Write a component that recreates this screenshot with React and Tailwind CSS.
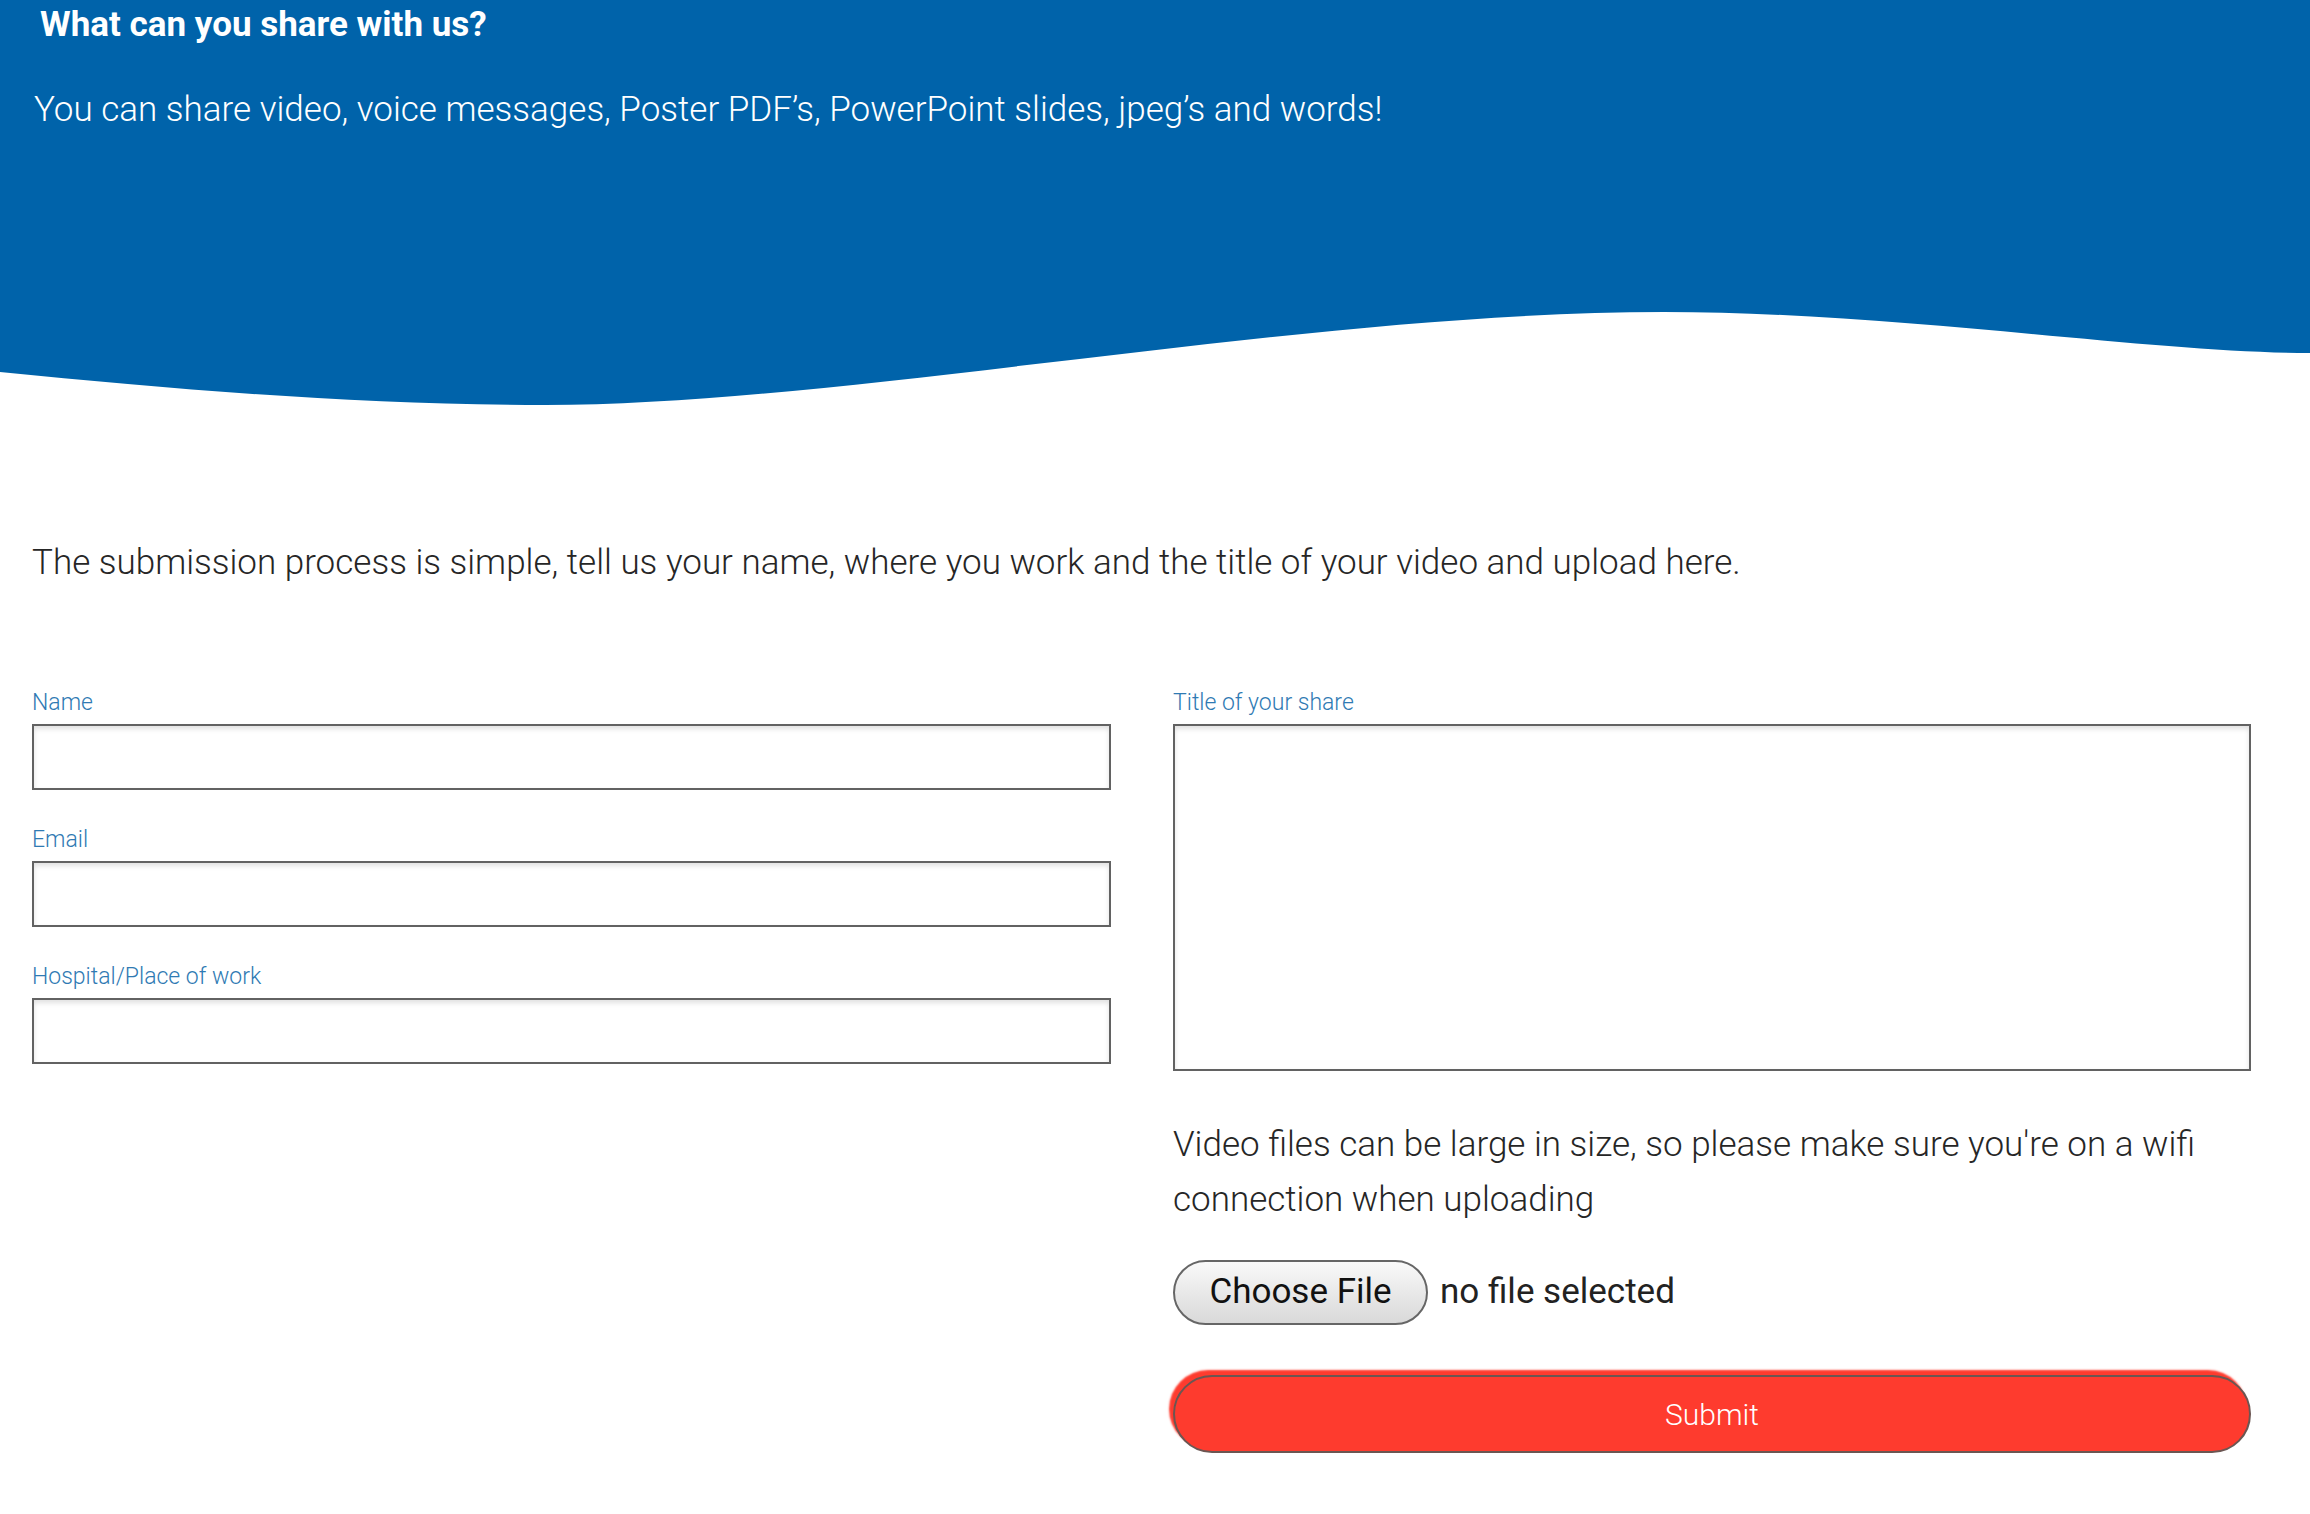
import React from 'react';

const labelCls = "block text-[23px] leading-[26px] font-light text-[#2f7ab3]";
const boxCls = "block w-full border-2 border-[#626262] bg-white shadow-[inset_0_3px_5px_rgba(0,0,0,0.12)] outline-none";

const Field = ({ label }) => (
  <div>
    <label className={labelCls}>{label}</label>
    <input type="text" className={`mt-2 h-[66px] ${boxCls}`} />
  </div>
);

export default function App() {
  return (
    <div className="min-h-[1514px] bg-white font-['Roboto',sans-serif] text-[#262626]">
      <header className="bg-[#0063aa] h-[300px] pt-[5px]">
        <h2 className="pl-[40px] text-[35px] leading-[40px] font-bold text-white">
          What can you share with us?
        </h2>
        <p className="pl-[34px] mt-[41px] text-[35px] leading-[48px] font-light text-white">
          You can share video, voice messages, Poster PDF’s, PowerPoint slides, jpeg’s and words!
        </p>
      </header>

      {/* wave under the banner */}
      <svg className="block w-full h-[110px]" viewBox="0 0 2310 110" preserveAspectRatio="none">
        <path
          d="M0 0 H2310 V53 C2150 53 1900 12 1664 12 C1300 12 850 105 545 105 C360 105 180 90 0 72 Z"
          fill="#0063aa"
        />
      </svg>

      <main className="px-[32px]">
        <p className="mt-[127px] text-[35px] leading-[51px] font-light">
          The submission process is simple, tell us your name, where you work and the title of your video and upload here.
        </p>

        <div className="mt-[102px] grid grid-cols-[1079px_1078px] gap-x-[62px] items-start">
          <div className="flex flex-col gap-[37px]">
            <Field label="Name" />
            <Field label="Email" />
            <Field label="Hospital/Place of work" />
          </div>

          <div>
            <label className={labelCls}>Title of your share</label>
            <textarea className={`mt-2 h-[347px] resize-none ${boxCls}`} />

            <p className="mt-[46px] text-[35px] leading-[55px] font-light whitespace-nowrap">
              Video files can be large in size, so please make sure you're on a wifi
              <br />
              connection when uploading
            </p>

            <div className="mt-[33px] flex items-center gap-[12px]">
              <button className="h-[65px] w-[255px] rounded-full border-2 border-[#666] bg-linear-to-b from-[#f9f9f9] to-[#d9d9d9] text-[35px] text-[#111]">
                Choose File
              </button>
              <span className="text-[35px] text-[#222]">no file selected</span>
            </div>

            <button className="mt-[50px] w-full h-[78px] rounded-full border-2 border-[#6b5652] bg-[#fe3b2e] shadow-[-4px_-5px_2px_#fe3b2e] text-white text-[30px] font-light">
              Submit
            </button>
          </div>
        </div>
      </main>
    </div>
  );
}
